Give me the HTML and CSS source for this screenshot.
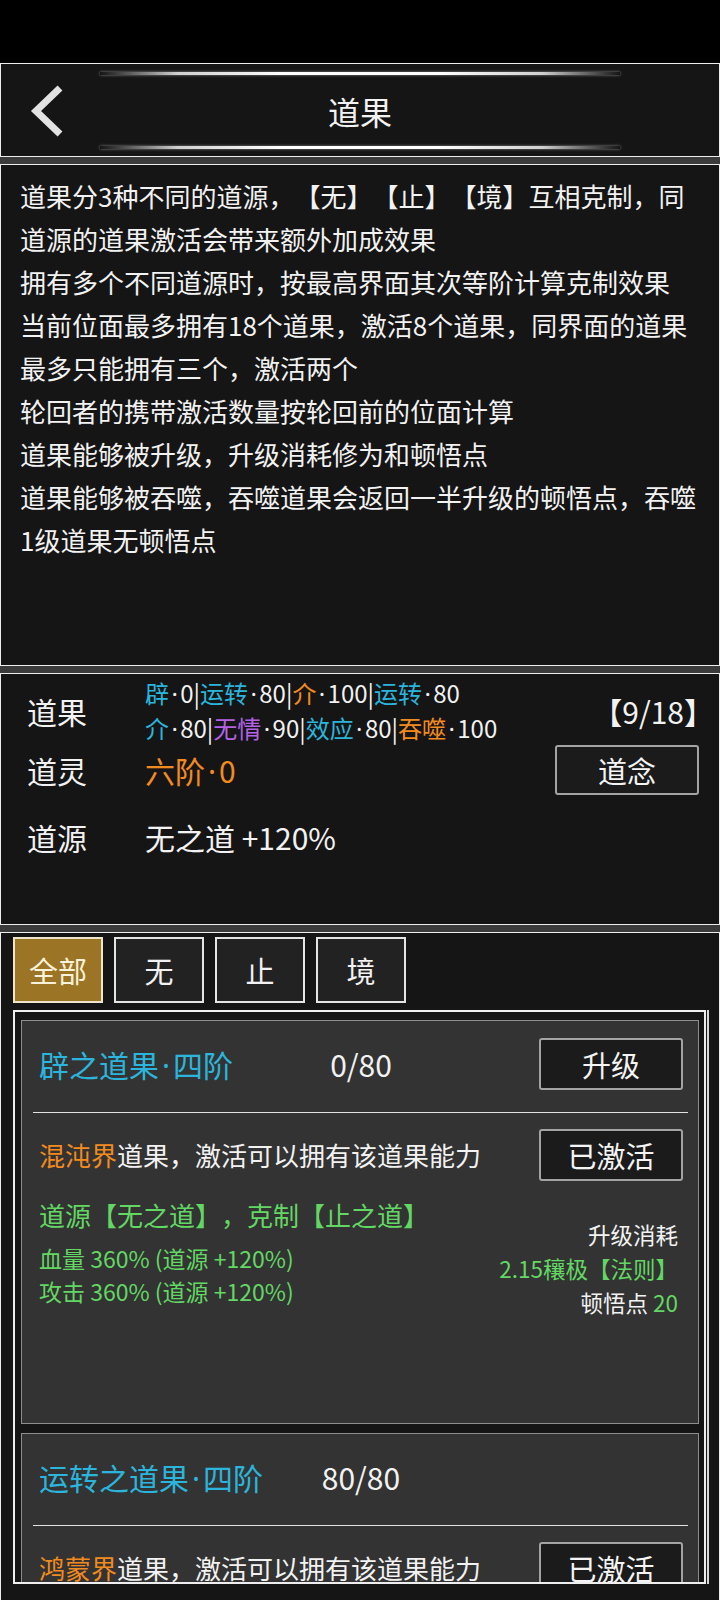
FILE: index.html
```html
<!DOCTYPE html>
<html lang="zh-CN">
<head>
    <meta charset="UTF-8">
    <meta name="viewport" content="width=720">
    <title>道果</title>
    <link rel="stylesheet" href="styles.css">
</head>
<body>
    <div class="status-bar"></div>

    <div class="panel header">
        <div class="glow"></div>
        <div class="nav">
            <a class="back" href="#">
                <svg width="36" height="54" viewBox="0 0 36 54">
                    <polyline points="32,4 8,27 32,50" fill="none" stroke="#e2e2e2" stroke-width="7"/>
                </svg>
            </a>
            <h1>道果</h1>
            <span></span>
        </div>
        <div class="glow"></div>
    </div>

    <div class="panel intro">
        <p>道果分3种不同的道源，【无】【止】【境】互相克制，同道源的道果激活会带来额外加成效果</p>
        <p>拥有多个不同道源时，按最高界面其次等阶计算克制效果</p>
        <p>当前位面最多拥有18个道果，激活8个道果，同界面的道果最多只能拥有三个，激活两个</p>
        <p>轮回者的携带激活数量按轮回前的位面计算</p>
        <p>道果能够被升级，升级消耗修为和顿悟点</p>
        <p>道果能够被吞噬，吞噬道果会返回一半升级的顿悟点，吞噬1级道果无顿悟点</p>
    </div>

    <div class="panel info">
        <div class="info-row fruits">
            <span class="info-label">道果</span>
            <div class="info-value fruit-list">
                <div><span class="cyan">辟</span><span class="dot">·</span>0|<span class="cyan">运转</span><span class="dot">·</span>80|<span class="orange">介</span><span class="dot">·</span>100|<span class="cyan">运转</span><span class="dot">·</span>80</div>
                <div><span class="cyan">介</span><span class="dot">·</span>80|<span class="purple">无情</span><span class="dot">·</span>90|<span class="cyan">效应</span><span class="dot">·</span>80|<span class="orange">吞噬</span><span class="dot">·</span>100</div>
            </div>
            <span class="fruit-count">【9/18】</span>
        </div>
        <div class="info-row">
            <span class="info-label">道灵</span>
            <span class="info-value orange">六阶<span class="dot">·</span>0</span>
            <button class="btn btn-small">道念</button>
        </div>
        <div class="info-row source">
            <span class="info-label">道源</span>
            <span class="info-value">无之道 +120%</span>
        </div>
    </div>

    <div class="panel fruit-panel">
        <div class="tabs">
            <button class="tab active">全部</button>
            <button class="tab">无</button>
            <button class="tab">止</button>
            <button class="tab">境</button>
        </div>

        <div class="fruit-box">
            <div class="fruit-card">
                <div class="card-head">
                    <span class="card-title cyan">辟之道果<span class="dot">·</span>四阶</span>
                    <span class="card-exp">0/80</span>
                    <button class="btn">升级</button>
                </div>
                <div class="card-line"></div>
                <div class="card-active">
                    <span><span class="orange">混沌界</span>道果，激活可以拥有该道果能力</span>
                    <button class="btn">已激活</button>
                </div>
                <div class="card-body">
                    <div class="card-effects green">
                        <div class="effect-source">道源【无之道】，克制【止之道】</div>
                        <div>血量 360% (道源 +120%)</div>
                        <div>攻击 360% (道源 +120%)</div>
                    </div>
                    <div class="card-cost">
                        <div>升级消耗</div>
                        <div class="green">2.15穰极【法则】</div>
                        <div>顿悟点 <span class="green">20</span></div>
                    </div>
                </div>
            </div>

            <div class="fruit-card">
                <div class="card-head">
                    <span class="card-title cyan">运转之道果<span class="dot">·</span>四阶</span>
                    <span class="card-exp">80/80</span>
                </div>
                <div class="card-line"></div>
                <div class="card-active">
                    <span><span class="orange">鸿蒙界</span>道果，激活可以拥有该道果能力</span>
                    <button class="btn">已激活</button>
                </div>
            </div>
        </div>
    </div>
</body>
</html>
```

FILE: styles.css
```css
body {
    margin: 0;
    width: 720px;
    background-color: #3b3b3b;
    color: #f2f2f2;
    font-family: "Noto Sans CJK SC", "Noto Sans", sans-serif;
    text-spacing-trim: space-all;
}

.status-bar {
    height: 63px;
    background: #000;
}

.panel {
    box-sizing: border-box;
    border: 1px solid #ededed;
    background: #151515;
    margin-bottom: 7px;
}

.cyan {
    color: #2bb5dc;
}

.orange {
    color: #f28b1f;
}

.purple {
    color: #b462e6;
}

.green {
    color: #63d763;
}

/* narrow middle dot, the CJK one is full width */
.dot {
    font-family: "Noto Sans", sans-serif;
    padding: 0 0.1em;
}

/* header */
.header {
    height: 94px;
    padding: 8px 0 7px;
    display: flex;
    flex-direction: column;
}

.glow {
    height: 3px;
    margin: 0 99px;
    background: linear-gradient(90deg, rgba(255, 255, 255, 0), #d0d0d0 15%, #fff 35%, #fff 65%, #d0d0d0 85%, rgba(255, 255, 255, 0));
    box-shadow: 0 0 3px rgba(255, 255, 255, 0.5);
}

.nav {
    flex: 1;
    display: grid;
    grid-template-columns: 1fr auto 1fr;
    align-items: center;
}

.back {
    display: flex;
    margin-left: 27px;
}

.nav h1 {
    margin: 0;
    font-size: 32px;
    font-weight: normal;
}

/* intro text */
.intro {
    height: 502px;
    padding: 9px 19px 0;
    font-size: 26px;
    line-height: 43px;
}

.intro p {
    margin: 0;
}

/* summary */
.info {
    height: 252px;
    padding: 3px 20px 0 26px;
}

.info-row {
    display: flex;
    align-items: center;
    height: 50px;
    font-size: 30px;
}

.info-row.fruits {
    height: 68px;
}

.info-row.source {
    margin-top: 17px;
}

.info-label {
    flex: none;
    width: 118px;
}

.info-value {
    flex: 1;
}

.fruit-list {
    font-size: 24px;
    line-height: 34px;
}

.fruit-count {
    margin-right: -15px;
}

.btn {
    flex: none;
    width: 144px;
    height: 52px;
    padding: 0;
    border: 2px solid #a3a3a3;
    border-radius: 3px;
    background: #1b1b1b;
    color: #f4f4f4;
    font-family: inherit;
    font-size: 29px;
}

.btn-small {
    height: 50px;
}

/* list */
.fruit-panel {
    margin-bottom: 0;
    padding: 4px 0 20px 12px;
}

.tabs {
    display: flex;
    gap: 11px;
}

.tab {
    box-sizing: border-box;
    width: 90px;
    height: 66px;
    padding: 0;
    border: 2px solid #e4e4e4;
    background: #222;
    color: #f2f2f2;
    font-family: inherit;
    font-size: 29px;
}

.tab.active {
    background: #9c7425;
    border-color: #efe5ca;
    color: #fbf2da;
}

.fruit-box {
    box-sizing: border-box;
    width: 693px;
    height: 574px;
    margin-top: 7px;
    padding: 8px 5px 0 6px;
    border: 2px solid #eee;
    overflow: hidden;
    box-shadow: 1px 0 0 #151515, 3px 0 0 #d8d8d8;
}

.fruit-card {
    box-sizing: border-box;
    height: 404px;
    margin-bottom: 9px;
    border: 1px solid #8e8e8e;
    background: #333;
}

.card-head {
    display: grid;
    grid-template-columns: 1fr auto 1fr;
    align-items: center;
    min-height: 52px;
    padding: 17px 15px 22px 17px;
    font-size: 30px;
}

.card-head .btn {
    justify-self: end;
}

.card-line {
    height: 1px;
    margin: 0 10px 0 11px;
    background: #e2e2e2;
}

.card-active {
    display: flex;
    justify-content: space-between;
    align-items: center;
    padding: 16px 15px 0 17px;
    font-size: 26px;
    line-height: 1;
}

.card-body {
    display: flex;
    justify-content: space-between;
    align-items: flex-start;
    padding: 17px 20px 0 17px;
}

.card-effects {
    font-size: 23px;
    line-height: 33px;
}

.effect-source {
    font-size: 26px;
    line-height: 34px;
    margin-bottom: 10px;
}

.card-cost {
    padding-top: 19px;
    font-size: 22.5px;
    line-height: 34px;
    text-align: right;
}
```
